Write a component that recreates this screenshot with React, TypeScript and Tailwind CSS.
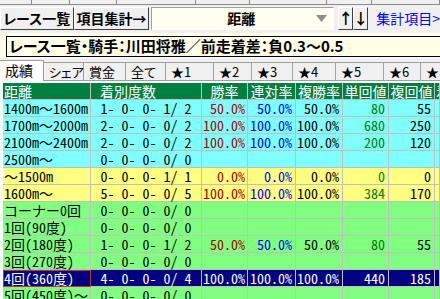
type Row = {
  name: string;
  count: string;
  win?: string;
  ren?: string;
  fuku?: string;
  tan?: string;
  fukuv?: string;
  bg: string;
  selected?: boolean;
};

const rows: Row[] = [
  { name: "1400m～1600m", count: "1- 0- 0- 1/ 2", win: "50.0%", ren: "50.0%", fuku: "50.0%", tan: "80", fukuv: "55", bg: "bg-[#80ffff]" },
  { name: "1700m～2000m", count: "2- 0- 0- 0/ 2", win: "100.0%", ren: "100.0%", fuku: "100.0%", tan: "680", fukuv: "250", bg: "bg-[#80ffff]" },
  { name: "2100m～2400m", count: "2- 0- 0- 0/ 2", win: "100.0%", ren: "100.0%", fuku: "100.0%", tan: "200", fukuv: "120", bg: "bg-[#80ffff]" },
  { name: "2500m～", count: "0- 0- 0- 0/ 0", bg: "bg-[#80ffff]" },
  { name: "～1500m", count: "0- 0- 0- 1/ 1", win: "0.0%", ren: "0.0%", fuku: "0.0%", tan: "0", fukuv: "0", bg: "bg-[#ffff80]" },
  { name: "1600m～", count: "5- 0- 0- 0/ 5", win: "100.0%", ren: "100.0%", fuku: "100.0%", tan: "384", fukuv: "170", bg: "bg-[#ffff80]" },
  { name: "コーナー0回", count: "0- 0- 0- 0/ 0", bg: "bg-[#80ff80]" },
  { name: "1回(90度)", count: "0- 0- 0- 0/ 0", bg: "bg-[#80ff80]" },
  { name: "2回(180度)", count: "1- 0- 0- 1/ 2", win: "50.0%", ren: "50.0%", fuku: "50.0%", tan: "80", fukuv: "55", bg: "bg-[#80ff80]" },
  { name: "3回(270度)", count: "0- 0- 0- 0/ 0", bg: "bg-[#80ff80]" },
  { name: "4回(360度)", count: "4- 0- 0- 0/ 4", win: "100.0%", ren: "100.0%", fuku: "100.0%", tan: "440", fukuv: "185", bg: "bg-[#000080]", selected: true },
  { name: "5回(450度)～", count: "0- 0- 0- 0/ 0", bg: "bg-[#80ff80]" },
];

const tabs = [
  { label: "成績", w: "w-[44px]" },
  { label: "シェア", w: "w-[40px]" },
  { label: "賞金", w: "w-[42px]" },
  { label: "全て", w: "w-[40px]" },
  { label: "★1", w: "w-[48px]" },
  { label: "★2", w: "w-[38px]" },
  { label: "★3", w: "w-[41px]" },
  { label: "★4", w: "w-[43px]" },
  { label: "★5", w: "w-[48px]" },
  { label: "★6", w: "w-[37px]" },
  { label: "★", w: "w-[30px]" },
];

const topStrip = ["w-[32px]", "w-[38px]", "w-[47px]", "w-[79px]", "w-[54px]", "w-[77px]", "w-[45px]", "flex-1"];

const cell = "shrink-0 border-r border-b border-[#c0c0c0] whitespace-pre";

const DataRow = ({ r }: { r: Row }) => {
  const sel = r.selected;
  return (
    <div className={`flex h-[17px] leading-[16px] ${r.bg}`}>
      <div className={`${cell} w-[88px] pl-[1px] ${sel ? "text-white outline outline-1 -outline-offset-1 outline-[#c03030]" : "text-black"}`}>
        {r.name}
      </div>
      <div className={`${cell} w-[111px] text-center ${sel ? "text-white" : "text-black"}`}>{r.count}</div>
      <div className={`${cell} w-[46px] text-right pr-[2px] ${sel ? "text-white" : "text-[#a80000]"}`}>{r.win}</div>
      <div className={`${cell} w-[48px] text-right pr-[3px] ${sel ? "text-white" : "text-[#0000ff]"}`}>{r.ren}</div>
      <div className={`${cell} w-[47px] text-right pr-[3px] ${sel ? "text-white" : "text-black"}`}>{r.fuku}</div>
      <div className={`${cell} w-[46px] text-right pr-[3px] ${sel ? "text-white" : "text-[#008000]"}`}>{r.tan}</div>
      <div className={`${cell} w-[46px] text-right pr-[3px] ${sel ? "text-white" : "text-black"}`}>{r.fukuv}</div>
      <div className={`${cell} flex-1`}></div>
    </div>
  );
};

export default function App() {
  return (
    <div className="w-[440px] h-[299px] overflow-hidden bg-[#f0f0f0] font-['Noto_Sans_CJK_JP',sans-serif] text-black">
      {/* cut-off button row */}
      <div className="flex h-[5px]">
        {topStrip.map((w, i) => (
          <div key={i} className={`${w} border-r border-b border-[#8a8a8a] bg-[#f0f0f0]`} />
        ))}
      </div>

      {/* toolbar */}
      <div className="mt-[2px] flex h-[23px] items-stretch">
        <div className="flex w-[76px] items-center justify-center border border-t-white border-l-white border-r-[#404040] border-b-[#404040] text-[14px] font-bold [font-feature-settings:'palt']">
          レース一覧
        </div>
        <div className="flex w-[78px] items-center justify-center border border-t-white border-l-white border-r-[#404040] border-b-[#404040] text-[14px] font-bold">
          項目集計→
        </div>
        <div className="ml-[2px] flex w-[189px] items-center border border-t-[#a0a0a0] border-l-[#a0a0a0] border-r-white border-b-white bg-[#fffff0]">
          <div className="w-[14px]" />
          <div className="flex-1 text-center text-[14px] font-bold">距離</div>
          <svg width="12" height="8" viewBox="0 0 12 8" className="mr-[5px]">
            <path d="M0 0 H11 L5.5 7 Z" fill="#8c8c8c" />
          </svg>
        </div>
        <div className="ml-[4px] flex w-[15px] items-center justify-center border border-t-white border-l-white border-r-[#404040] border-b-[#404040] text-[15px] font-bold">
          ↑
        </div>
        <div className="flex w-[15px] items-center justify-center border border-t-white border-l-white border-r-[#404040] border-b-[#404040] text-[15px] font-bold">
          ↓
        </div>
        <div className="ml-[8px] flex items-center whitespace-nowrap text-[14px] text-[#0000ff]">集計項目&gt;</div>
      </div>

      {/* condition line */}
      <div className="mt-[3px] h-[25px] bg-[#ffffe8] pl-[6px] pt-[3px]">
        <div className="flex h-[21px] items-center border-t border-b border-l border-black pl-[2px] text-[15px] font-bold whitespace-nowrap [font-feature-settings:'palt']">
          レース一覧・騎手：川田将雅／前走着差：負0.3～0.5
        </div>
      </div>

      {/* tabs */}
      <div className="mt-[2px] flex h-[20px] items-end">
        {tabs.map((t, i) =>
          i === 0 ? (
            <div
              key={t.label}
              className={`${t.w} relative z-10 -mb-[1px] h-[21px] shrink-0 border-t border-r border-[#a0a0a0] bg-white pl-[5px] text-[14px] leading-[19px]`}
            >
              {t.label}
            </div>
          ) : (
            <div
              key={t.label}
              className={`${t.w} h-[18px] shrink-0 border-t border-r border-[#a0a0a0] bg-[#f0f0f0] pl-[5px] text-[13px] leading-[17px] whitespace-nowrap [font-feature-settings:'palt']`}
            >
              {t.label}
            </div>
          )
        )}
      </div>

      {/* grid */}
      <div className="border-t border-[#a0a0a0] bg-white pl-[3px] pt-[2px]">
        <div className="flex h-[17px] bg-[#008040] text-[14px] leading-[16px] text-white">
          <div className={`${cell} w-[88px] pl-[1px]`}>距離</div>
          <div className={`${cell} w-[111px] pl-[9px]`}>着別度数</div>
          <div className={`${cell} w-[46px] text-center`}>勝率</div>
          <div className={`${cell} w-[48px] text-center`}>連対率</div>
          <div className={`${cell} w-[47px] text-center`}>複勝率</div>
          <div className={`${cell} w-[46px] text-center`}>単回値</div>
          <div className={`${cell} w-[46px] text-center`}>複回値</div>
          <div className={`${cell} flex-1 overflow-hidden pl-[1px]`}>着差</div>
        </div>
        <div className="font-['Noto_Sans_Mono_CJK_JP','Liberation_Mono',monospace] text-[14px]">
          {rows.map((r) => (
            <DataRow key={r.name} r={r} />
          ))}
        </div>
      </div>
    </div>
  );
}
